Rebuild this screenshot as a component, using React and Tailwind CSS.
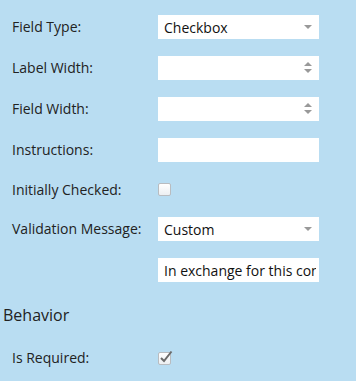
import React from 'react';

const font = { fontFamily: '"Open Sans", "Liberation Sans", sans-serif' };

function SelectArrow() {
  return (
    <svg width="8" height="4" viewBox="0 0 8 4" className="absolute right-[7px] top-[10px]">
      <path d="M0 0 L8 0 L4 4 Z" fill="#999" />
    </svg>
  );
}

function Spinner() {
  return (
    <svg width="8" height="12" viewBox="0 0 8 12" className="absolute right-[7px] top-[6px]">
      <path d="M0 4 L8 4 L4 0 Z" fill="#999" />
      <path d="M0 7 L8 7 L4 11 Z" fill="#999" />
    </svg>
  );
}

function Row({ label, children, h = 'h-6' }) {
  return (
    <div className={`flex items-center ${h} mb-[17px]`}>
      <div className="w-[158px] shrink-0 pl-3 text-[14px] text-[#222] leading-none whitespace-nowrap">{label}</div>
      {children}
    </div>
  );
}

function Box({ children }) {
  return (
    <div className="relative w-[161px] shrink-0 h-6 bg-white text-[14px] text-[#111] flex items-center pl-[6px] overflow-hidden">
      {children}
    </div>
  );
}

function Check({ checked }) {
  return (
    <div className="relative w-[13px] h-[13px] rounded-[2px] border border-[#b9bcc0] bg-gradient-to-b from-white to-[#eceff2]">
      {checked && (
        <svg width="15" height="14" viewBox="0 0 15 14" className="absolute left-0 top-[-3px]">
          <path d="M2 8 L5 11 L12.5 1.5" stroke="#6b6b6b" strokeWidth="2" fill="none" />
        </svg>
      )}
    </div>
  );
}

export default function App() {
  return (
    <div className="w-[356px] h-[381px] bg-[#b9ddf2] pt-[15px] overflow-hidden" style={font}>
      <Row label="Field Type:">
        <Box>Checkbox<SelectArrow /></Box>
      </Row>
      <Row label="Label Width:">
        <Box><Spinner /></Box>
      </Row>
      <Row label="Field Width:">
        <Box><Spinner /></Box>
      </Row>
      <Row label="Instructions:">
        <Box />
      </Row>
      <Row label="Initially Checked:" h="h-[21px]">
        <Check />
      </Row>
      <Row label="Validation Message:">
        <Box>Custom<SelectArrow /></Box>
      </Row>
      <Row label="">
        <input
          readOnly
          value="In exchange for this content, please complete the form."
          className="w-[161px] shrink-0 h-6 bg-white text-[14px] text-[#111] pl-[6px] pr-[3px] outline-none border-0"
          style={font}
        />
      </Row>
      <div className="pl-[3px] pt-[8px] text-[16px] text-[#222] leading-none">Behavior</div>
      <div className="flex items-center h-[14px] mt-[28px]">
        <div className="w-[158px] shrink-0 pl-3 text-[14px] text-[#222] leading-none">Is Required:</div>
        <Check checked />
      </div>
    </div>
  );
}
